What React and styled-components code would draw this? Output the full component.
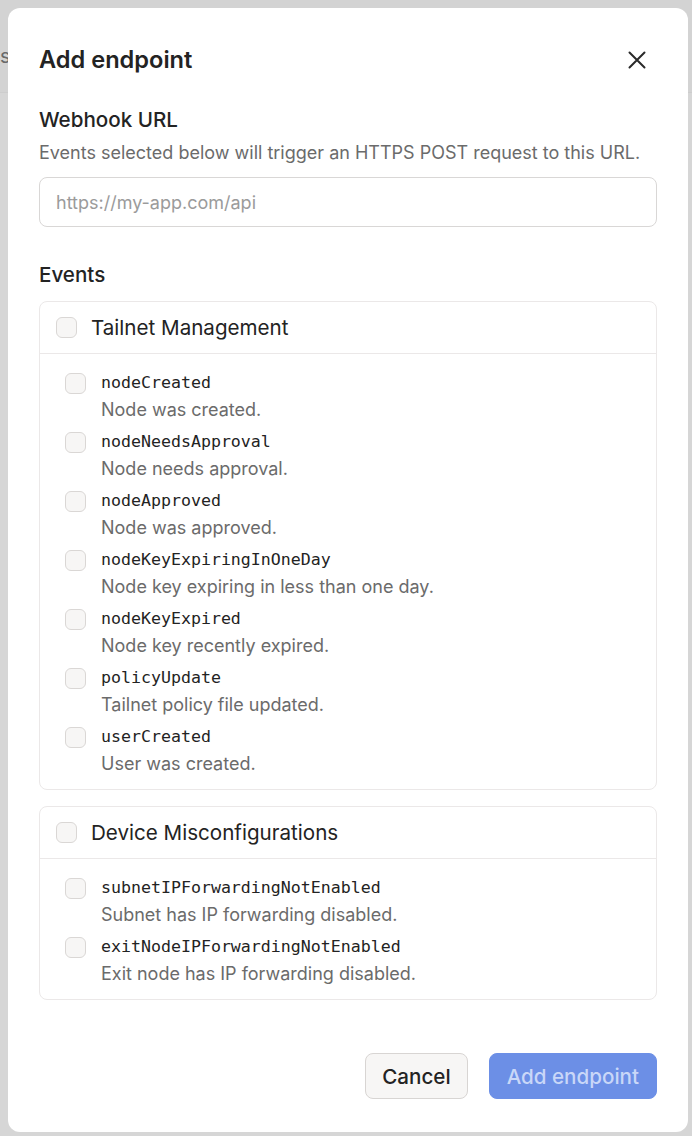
import React from "react";
import styled, { createGlobalStyle } from "styled-components";

const Global = createGlobalStyle`
  html, body { margin: 0; padding: 0; }
  body {
    background: #d6d6d6;
    font-family: Inter, "Noto Sans", "Liberation Sans", sans-serif;
    color: #232323;
  }
`;

const Backdrop = styled.div`
  position: relative;
  min-height: 1136px;
  padding: 8px 4px 4px 8px;
  box-sizing: border-box;
  overflow: hidden;
`;

const PageGhost = styled.div`
  position: absolute;
  left: 0;
  top: 0;
  width: 100%;
  height: 92px;
  border-bottom: 1px solid #cdcdcd;
  background: #d3d3d3;
`;

const GhostText = styled.span`
  position: absolute;
  left: 0;
  top: 44px;
  font-size: 20px;
  color: #6a6a6a;
`;

const Modal = styled.div`
  position: relative;
  width: 680px;
  height: 1124px;
  box-sizing: border-box;
  background: #ffffff;
  border-radius: 12px;
  padding: 33px 31px 33px 31px;
  display: flex;
  flex-direction: column;
`;

const TitleRow = styled.div`
  display: flex;
  align-items: center;
  justify-content: space-between;
  height: 38px;
`;

const Title = styled.h2`
  margin: 0;
  font-size: 23.6px;
  font-weight: 600;
  line-height: 38px;
  color: #232323;
`;

const CloseButton = styled.button`
  width: 40px;
  height: 40px;
  border: none;
  background: transparent;
  display: flex;
  align-items: center;
  justify-content: center;
  padding: 0;
  cursor: pointer;
  color: #2a2a2a;
`;

const Label = styled.div`
  font-size: 20.6px;
  font-weight: 500;
  line-height: 28px;
  color: #232323;
  margin-top: ${(p) => p.$mt || 0}px;
`;

const Help = styled.div`
  font-size: 18px;
  line-height: 26px;
  color: #6b6b6b;
  margin-top: 6px;
`;

const Input = styled.input`
  margin-top: 11px;
  height: 50px;
  box-sizing: border-box;
  width: 100%;
  border: 1px solid #d9d7d6;
  border-radius: 8px;
  padding: 0 16px;
  font-family: inherit;
  font-size: 18px;
  color: #232323;
  outline: none;
  &::placeholder {
    color: #9b9b9b;
  }
`;

const Group = styled.div`
  margin-top: ${(p) => p.$mt}px;
  border: 1px solid #ebe8e8;
  border-radius: 8px;
`;

const GroupHeader = styled.label`
  display: flex;
  align-items: center;
  gap: 14px;
  height: 51px;
  padding: 0 16px;
  border-bottom: 1px solid #ebe8e8;
  font-size: 20.6px;
  color: #232323;
`;

const Items = styled.div`
  display: flex;
  flex-direction: column;
  gap: 6px;
  padding: 16px 25px 12px 25px;
`;

const Item = styled.label`
  display: flex;
  align-items: flex-start;
  gap: 14px;
`;

const Box = styled.span`
  flex: none;
  width: 21px;
  height: 21px;
  box-sizing: border-box;
  border: 1px solid #dad7d5;
  border-radius: 6px;
  background: #f7f6f5;
  margin-top: ${(p) => p.$mt || 0}px;
`;

const ItemText = styled.div`
  display: flex;
  flex-direction: column;
  padding-left: 1px;
`;

const Code = styled.span`
  font-family: "DejaVu Sans Mono", "Liberation Mono", monospace;
  font-size: 16.6px;
  line-height: 26px;
  color: #232323;
`;

const ItemDesc = styled.span`
  font-size: 18px;
  line-height: 27px;
  color: #6b6b6b;
`;

const Footer = styled.div`
  margin-top: auto;
  display: flex;
  justify-content: flex-end;
  gap: 21px;
`;

const Button = styled.button`
  height: 46px;
  box-sizing: border-box;
  border-radius: 8px;
  font-family: inherit;
  font-size: 20.6px;
  font-weight: 500;
  padding: 0 ${(p) => (p.$primary ? 17 : 16)}px;
  cursor: pointer;
  border: 1px solid ${(p) => (p.$primary ? "#6c8fe6" : "#d8d5d3")};
  background: ${(p) => (p.$primary ? "#6c8fe6" : "#f7f6f5")};
  color: ${(p) => (p.$primary ? "#c9d7f8" : "#232323")};
`;

const groups = [
  {
    title: "Tailnet Management",
    items: [
      ["nodeCreated", "Node was created."],
      ["nodeNeedsApproval", "Node needs approval."],
      ["nodeApproved", "Node was approved."],
      ["nodeKeyExpiringInOneDay", "Node key expiring in less than one day."],
      ["nodeKeyExpired", "Node key recently expired."],
      ["policyUpdate", "Tailnet policy file updated."],
      ["userCreated", "User was created."],
    ],
  },
  {
    title: "Device Misconfigurations",
    items: [
      ["subnetIPForwardingNotEnabled", "Subnet has IP forwarding disabled."],
      ["exitNodeIPForwardingNotEnabled", "Exit node has IP forwarding disabled."],
    ],
  },
];

export default function App() {
  return (
    <>
      <Global />
      <Backdrop>
        <PageGhost>
          <GhostText>s</GhostText>
        </PageGhost>
        <Modal>
          <TitleRow>
            <Title>Add endpoint</Title>
            <CloseButton aria-label="Close">
              <svg width="20" height="20" viewBox="0 0 20 20" fill="none" stroke="currentColor" strokeWidth="2" strokeLinecap="round">
                <path d="M2.5 2.5 L17.5 17.5 M17.5 2.5 L2.5 17.5" />
              </svg>
            </CloseButton>
          </TitleRow>
          <Label $mt={27}>Webhook URL</Label>
          <Help>Events selected below will trigger an HTTPS POST request to this URL.</Help>
          <Input placeholder="https://my-app.com/api" />
          <Label $mt={34}>Events</Label>
          {groups.map((g, gi) => (
            <Group key={g.title} $mt={gi === 0 ? 12 : 16}>
              <GroupHeader>
                <Box />
                {g.title}
              </GroupHeader>
              <Items>
                {g.items.map(([name, desc]) => (
                  <Item key={name}>
                    <Box $mt={3} />
                    <ItemText>
                      <Code>{name}</Code>
                      <ItemDesc>{desc}</ItemDesc>
                    </ItemText>
                  </Item>
                ))}
              </Items>
            </Group>
          ))}
          <Footer>
            <Button>Cancel</Button>
            <Button $primary>Add endpoint</Button>
          </Footer>
        </Modal>
      </Backdrop>
    </>
  );
}
